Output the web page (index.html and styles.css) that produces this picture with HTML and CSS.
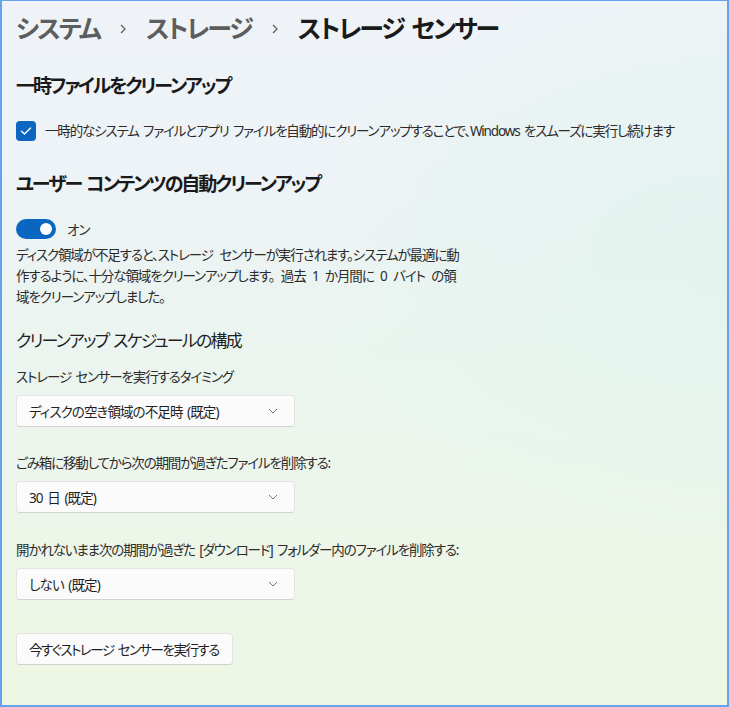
FILE: index.html
```html
<!DOCTYPE html>
<html lang="ja">
<head>
<meta charset="utf-8">
<title>ストレージ センサー</title>
<link rel="stylesheet" href="styles.css">
</head>
<body>
<div class="frame">
  <main class="page">
    <nav class="crumbs">
      <span class="crumb">システム</span>
      <svg class="sep" width="8" height="12" viewBox="0 0 8 12"><polyline points="2,2 6,6 2,10" fill="none" stroke="#5f5f5f" stroke-width="1.3"/></svg>
      <span class="crumb">ストレージ</span>
      <svg class="sep" width="8" height="12" viewBox="0 0 8 12"><polyline points="2,2 6,6 2,10" fill="none" stroke="#5f5f5f" stroke-width="1.3"/></svg>
      <span class="crumb current">ストレージ センサー</span>
    </nav>

    <h2 class="section-title first">一時ファイルをクリーンアップ</h2>
    <label class="check-row">
      <span class="checkbox"><svg width="12" height="10" viewBox="0 0 12 10"><polyline points="1.5,5.2 4.5,8 10.5,2" fill="none" stroke="#fff" stroke-width="1.4" stroke-linecap="round" stroke-linejoin="round"/></svg></span>
      <span class="check-text">一時的なシステム ファイルとアプリ ファイルを自動的にクリーンアップすることで、Windows をスムーズに実行し続けます</span>
    </label>

    <h2 class="section-title second">ユーザー コンテンツの自動クリーンアップ</h2>
    <div class="toggle-row">
      <span class="toggle"><span class="knob"></span></span>
      <span class="toggle-label">オン</span>
    </div>
    <p class="desc">ディスク領域が不足すると、ストレージ センサーが実行されます。システムが最適に動作するように、十分な領域をクリーンアップします。 過去 1 か月間に 0 バイト の領域をクリーンアップしました。</p>

    <h3 class="sub-title">クリーンアップ スケジュールの構成</h3>

    <div class="field">
      <div class="field-label">ストレージ センサーを実行するタイミング</div>
      <div class="select"><span>ディスクの空き領域の不足時 (既定)</span><svg width="10" height="6" viewBox="0 0 10 6"><polyline points="1,1 5,5 9,1" fill="none" stroke="#777" stroke-width="1"/></svg></div>
    </div>
    <div class="field">
      <div class="field-label">ごみ箱に移動してから次の期間が過ぎたファイルを削除する:</div>
      <div class="select"><span>30 日 (既定)</span><svg width="10" height="6" viewBox="0 0 10 6"><polyline points="1,1 5,5 9,1" fill="none" stroke="#777" stroke-width="1"/></svg></div>
    </div>
    <div class="field">
      <div class="field-label">開かれないまま次の期間が過ぎた [ダウンロード] フォルダー内のファイルを削除する:</div>
      <div class="select"><span>しない (既定)</span><svg width="10" height="6" viewBox="0 0 10 6"><polyline points="1,1 5,5 9,1" fill="none" stroke="#777" stroke-width="1"/></svg></div>
    </div>

    <button class="run-btn" type="button">今すぐストレージ センサーを実行する</button>
  </main>
</div>
</body>
</html>
```

FILE: styles.css
```css
html, body {
  margin: 0;
  padding: 0;
  height: 100%;
}
body {
  font-family: "Noto Sans", "Noto Sans CJK JP", sans-serif;
  font-feature-settings: "palt";
  color: #1b1b1b;
}
.frame {
  box-sizing: border-box;
  height: 707px;
  border-style: solid;
  border-color: #66a3ef;
  border-width: 1px 2px 2px 2px;
  background:
    radial-gradient(ellipse 420px 300px at 720px 260px, rgba(226, 244, 238, 0.9), rgba(226, 244, 238, 0) 100%),
    linear-gradient(to bottom, #eff3f8 0%, #edf3f6 25%, #ebf5ee 55%, #eef7e3 100%);
  overflow: hidden;
}
.page {
  padding: 8px 0 0 14px;
}
.crumbs {
  display: flex;
  align-items: center;
  font-size: 25px;
  font-weight: 600;
  letter-spacing: -2px;
  word-spacing: 3px;
  line-height: 38px;
  color: #5d5d5d;
}
.crumbs .sep {
  margin: 2px 19px 0 19px;
}
.crumb.current {
  color: #1a1a1a;
}
.section-title {
  margin: 0;
  font-size: 19px;
  font-weight: 600;
  letter-spacing: -2.1px;
  word-spacing: 2px;
  line-height: 28px;
  color: #1a1a1a;
}
.section-title.first {
  margin-top: 25px;
}
.section-title.second {
  margin-top: 29px;
}
.check-row {
  display: flex;
  align-items: center;
  margin-top: 21px;
  gap: 9px;
}
.checkbox {
  width: 20px;
  height: 20px;
  border-radius: 4px;
  background: #0a66c1;
  display: flex;
  align-items: center;
  justify-content: center;
  flex: none;
}
.check-text {
  font-size: 13.5px;
  letter-spacing: -1.15px;
  word-spacing: 2px;
  line-height: 20px;
  color: #2b2b2b;
  white-space: nowrap;
}
.toggle-row {
  display: flex;
  align-items: center;
  margin-top: 21px;
  gap: 11px;
}
.toggle {
  width: 40px;
  height: 20px;
  border-radius: 10px;
  background: #0a66c1;
  display: flex;
  align-items: center;
  justify-content: flex-end;
  padding-right: 4px;
  box-sizing: border-box;
}
.knob {
  width: 12px;
  height: 12px;
  border-radius: 50%;
  background: #fff;
}
.toggle-label {
  font-size: 13.5px;
  letter-spacing: -1px;
  color: #2b2b2b;
}
.desc {
  margin: 6px 0 0 0;
  width: 444px;
  font-size: 13.5px;
  letter-spacing: -1.1px;
  word-spacing: 4px;
  line-height: 21px;
  color: #2b2b2b;
}
.sub-title {
  margin: 20px 0 0 0;
  font-size: 17px;
  font-weight: 400;
  letter-spacing: -1.8px;
  word-spacing: 2px;
  line-height: 26px;
  color: #1f1f1f;
}
.field {
  margin-top: 13px;
}
.field + .field {
  margin-top: 26px;
}
.field:last-of-type {
  margin-top: 27px;
}
.field-label {
  font-size: 13.5px;
  letter-spacing: -1.15px;
  word-spacing: 2px;
  line-height: 20px;
  color: #2b2b2b;
}
.select {
  margin-top: 8px;
  width: 279px;
  height: 32px;
  box-sizing: border-box;
  background: #fbfbfb;
  border: 1px solid #e4e4e4;
  border-bottom-color: #d2d2d2;
  border-radius: 4px;
  display: flex;
  align-items: center;
  justify-content: space-between;
  padding: 0 16px 0 12px;
  font-size: 13.5px;
  letter-spacing: -0.9px;
  word-spacing: 2px;
  color: #1f1f1f;
}
.run-btn {
  display: block;
  box-sizing: border-box;
  margin-top: 33px;
  height: 32px;
  padding: 0 13px 0 12px;
  background: #fbfbfb;
  border: 1px solid #e2e2e2;
  border-bottom-color: #d0d0d0;
  border-radius: 4px;
  font-family: inherit;
  font-feature-settings: "palt";
  font-size: 13.5px;
  letter-spacing: -1.5px;
  word-spacing: 2px;
  color: #1f1f1f;
}
```
